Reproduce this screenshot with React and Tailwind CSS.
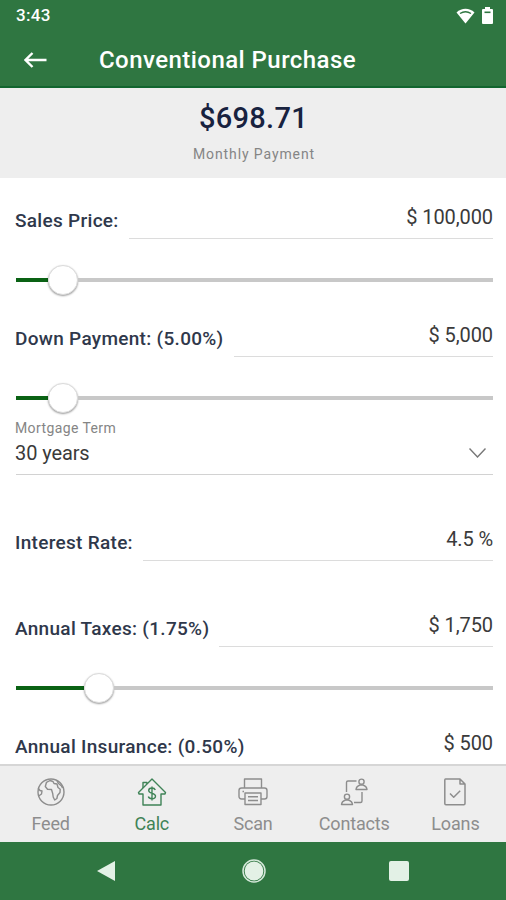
import clsx from "clsx";

const fields = [
  { id: "price", label: "Sales Price:", value: "$ 100,000", slider: 47 },
  { id: "down", label: "Down Payment: (5.00%)", value: "$ 5,000", slider: 47 },
];

const moreFields = [
  { id: "taxes", label: "Annual Taxes: (1.75%)", value: "$ 1,750", slider: 83 },
  { id: "insurance", label: "Annual Insurance: (0.50%)", value: "$ 500" },
];

const GlobeIcon = () => (
  <svg width="28" height="28" viewBox="0 0 28 28" fill="none" stroke="currentColor" strokeWidth="1.4" strokeLinejoin="round">
    <circle cx="14" cy="14" r="13" />
    <path d="M13 2.500 9.500 4.300 8.300 8.500l2.200 2.700 4 .3 1.200 4 .5 3.500 1.500 3 2.200-1.500.6-3 2.500-3 .2-3.200L21 9.500l-1-3.500-3-.5-1-2Z" />
    <path d="M1.200 10.300 3 12.500l2 .5-.5 3-2.800 2M20 2.800l1.500 2.700 3 2.500 1 2" />
  </svg>
);

const HouseIcon = () => (
  <svg width="30" height="28" viewBox="0 0 30 28" fill="none" stroke="currentColor" strokeWidth="1.4" strokeLinejoin="round">
    <path d="M15 1 1.500 14.500 2 16h4v11h18V16h4l.5-1.500L15 1Z" />
    <path d="M6 10V4.500h4V6" />
    <path d="M18.300 12c-.5-1.300-1.700-2-3.300-2-1.900 0-3.300 1-3.300 2.600 0 3.700 6.800 1.800 6.800 5.500 0 1.700-1.500 2.700-3.500 2.700-1.800 0-3.200-.8-3.700-2.300M15 8.500v14" />
  </svg>
);

const PrinterIcon = () => (
  <svg width="30" height="28" viewBox="0 0 30 28" fill="none" stroke="currentColor" strokeWidth="1.400" strokeLinejoin="round">
    <path d="M6.500 10V1h17v9" />
    <path d="M7 21H3.500C2 21 1 20 1 18.500v-6C1 11 2 10 3.500 10h23c1.500 0 2.500 1 2.500 2.500v6c0 1.500-1 2.500-2.500 2.500H23" />
    <path d="M7 15h16v11.500H7zM10 18.700h10M10 22.500h10M4.500 13.500H6" />
  </svg>
);

const ContactsIcon = () => (
  <svg width="28" height="28" viewBox="0 0 28 28" fill="none" stroke="currentColor" strokeWidth="1.400" strokeLinejoin="round">
    <circle cx="21.500" cy="3.700" r="2.600" />
    <path d="M16 11.500c.2-2.300 1.600-3.600 4-4.500h3c2.400.9 3.800 2.200 4 4.500z" />
    <circle cx="7" cy="18.700" r="2.600" />
    <path d="M1.500 26.500c.2-2.300 1.600-3.600 4-4.500h3c2.400.9 3.800 2.200 4 4.500z" />
    <path d="M16.500 3H8Q6.500 3 6.500 4.500V14M22 14v9q0 1.500-1.500 1.500H14" />
  </svg>
);

const LoansIcon = () => (
  <svg width="24" height="28" viewBox="0 0 24 28" fill="none" stroke="currentColor" strokeWidth="1.500" strokeLinejoin="round">
    <path d="M2.500 1H17l5 5v19.500q0 1.200-1.200 1.200H3q-1.200 0-1.200-1.200V2Q1.800 1 2.500 1ZM17 1v5h5M7 15.500l3.700 3.700 6.500-6.500" />
  </svg>
);

const tabs = [
  { name: "Feed", icon: <GlobeIcon /> },
  { name: "Calc", icon: <HouseIcon />, active: true },
  { name: "Scan", icon: <PrinterIcon /> },
  { name: "Contacts", icon: <ContactsIcon /> },
  { name: "Loans", icon: <LoansIcon /> },
];

const Slider = ({ offset }) => (
  <div className="flex h-[57px] items-center pt-[25px]">
    <div className="h-1 bg-[#0a6214]" style={{ width: offset - 15 }} />
    <div className="h-[30px] w-[30px] shrink-0 rounded-full border border-[#dcdcdc] bg-white shadow-[0_1px_2px_rgba(0,0,0,0.4)]" />
    <div className="h-1 flex-1 bg-[#c8c8c8]" />
  </div>
);

const Field = ({ label, value }) => (
  <div className="flex h-[61px] items-end gap-2.5">
    <label className="-ml-px pb-1.5 text-[19px] leading-6 font-medium tracking-[0.3px] whitespace-nowrap text-[#2f384b]">
      {label}
    </label>
    <div className="flex-1 border-b border-[#dcdcdc] pb-[9px] text-right text-[20px] leading-6 tracking-[-0.1px] text-[#3a3a3a]">
      {value}
    </div>
  </div>
);

const Header = () => (
  <header className="h-[88px] shrink-0 border-b-2 border-[#12662f] bg-[#2f7641] text-white">
    <div className="flex h-8 items-center justify-between pr-[13px] pl-4">
      <span className="text-[17px] font-medium tracking-[0.3px]">3:43</span>
      <div className="flex items-center gap-[7px]">
        <svg width="19" height="16" viewBox="0 0 19 16">
          <path d="M.5 4.500C5.500-.5 13.500-.5 18.500 4.500L9.500 15.500Z" fill="white" />
          <path d="M4 5.500c3.300-2.200 7.700-2.200 11 0" fill="none" stroke="#2f7641" strokeWidth="1.400" />
        </svg>
        <svg className="mb-0.5" width="11" height="17" viewBox="0 0 11 17">
          <path d="M3 0h5v2h2q1 0 1 1v13q0 1-1 1H1q-1 0-1-1V3q0-1 1-1h2Z" fill="white" />
          <path d="M2.500 5.300h6" stroke="#2f7641" strokeWidth="1.600" />
        </svg>
      </div>
    </div>
    <div className="flex h-14 items-center pl-6">
      <svg width="23" height="16" viewBox="0 0 23 16" fill="none" stroke="white" strokeWidth="2.400">
        <path d="M22.500 8H1.500M8.500 1l-7 7 7 7" />
      </svg>
      <h1 className="ml-[52px] text-[24px] font-medium tracking-[0.45px]">Conventional Purchase</h1>
    </div>
  </header>
);

export default function App() {
  return (
    <div className="flex h-[900px] w-[506px] flex-col overflow-hidden bg-white font-[Roboto,sans-serif]">
      <Header />

      {/* Payment summary */}
      <section className="flex h-[90px] shrink-0 flex-col items-center bg-[#eeeeee] pt-3">
        <div className="pl-px text-[29px] leading-9 font-medium tracking-[0.3px] text-[#18223f]">$698.71</div>
        <div className="mt-2 pl-0.5 text-[14px] leading-5 tracking-[0.9px] text-[#858585]">Monthly Payment</div>
      </section>

      <main className="min-h-0 flex-1 overflow-hidden pr-[13px] pl-4">
        {fields.map((field) => (
          <div key={field.id}>
            <Field label={field.label} value={field.value} />
            <Slider offset={field.slider} />
          </div>
        ))}

        <div className="flex h-[61px] items-end justify-between border-b border-[#d2d2d2] pr-[7px] pb-[9px]">
          <div className="-ml-px">
            <div className="text-[14px] leading-5 tracking-[0.4px] text-[#858585]">Mortgage Term</div>
            <div className="mt-[3px] text-[20px] leading-6 tracking-[-0.1px] text-[#3a3a3a]">30 years</div>
          </div>
          <svg className="mb-[7px]" width="17" height="10" viewBox="0 0 17 10" fill="none" stroke="#777" strokeWidth="1.400">
            <path d="m.5.5 8 8.500 8-8.500" />
          </svg>
        </div>

        <div className="my-[25px]">
          <Field label="Interest Rate:" value="4.5 %" />
        </div>

        {moreFields.map((field) => (
          <div key={field.id}>
            <Field label={field.label} value={field.value} />
            {field.slider && <Slider offset={field.slider} />}
          </div>
        ))}
      </main>

      {/* Tab bar */}
      <nav className="flex h-[78px] shrink-0 border-t-2 border-[#d6d6d6] bg-[#eeeeee]">
        {tabs.map((tab) => (
          <div
            key={tab.name}
            className={clsx("flex flex-1 flex-col items-center pt-3", tab.active ? "text-[#3f8357]" : "text-[#8d8d8d]")}
          >
            {tab.icon}
            <span className="mt-1.5 text-[18px] leading-6 tracking-[-0.15px]">{tab.name}</span>
          </div>
        ))}
      </nav>

      {/* Android navigation */}
      <div className="flex h-[58px] shrink-0 items-center justify-between bg-[#2f7641] px-[97px]">
        <svg width="18" height="22" viewBox="0 0 18 22">
          <path d="M18 1v20L0 11Z" fill="#e3f1e6" />
        </svg>
        <svg className="ml-[3px]" width="24" height="24" viewBox="0 0 24 24">
          <circle cx="12" cy="12" r="11" fill="none" stroke="#d5e8da" strokeWidth="1.500" />
          <circle cx="12" cy="12" r="9.400" fill="#e3f1e6" />
        </svg>
        <div className="h-5 w-5 rounded-[2px] bg-[#e3f1e6]" />
      </div>
    </div>
  );
}
